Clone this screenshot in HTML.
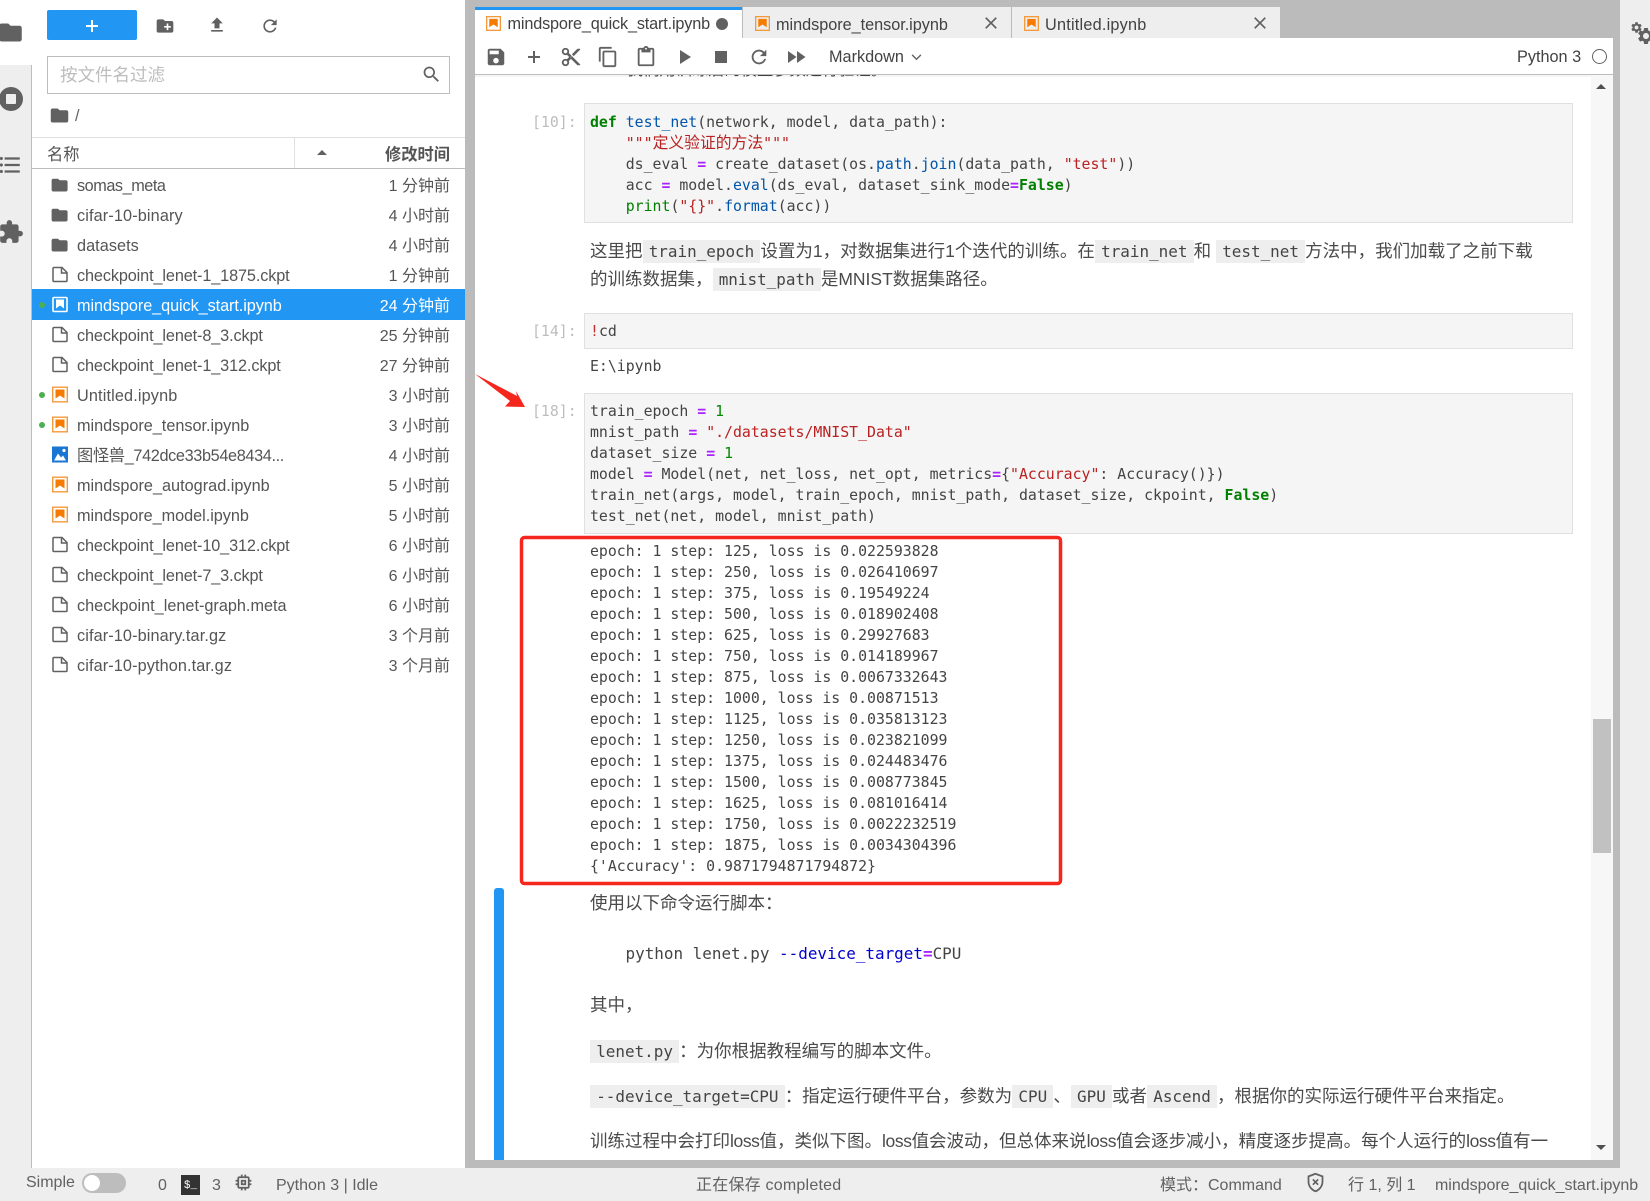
<!DOCTYPE html>
<html lang="zh"><head><meta charset="utf-8"><title>JupyterLab</title>
<style>
html,body{margin:0;padding:0;width:1650px;height:1201px;overflow:hidden;background:#fff}
body{position:relative;font-family:"Liberation Sans","Noto Sans CJK SC",sans-serif;color:#424242;font-size:16.25px}
.a,.i,.b{position:absolute}
.a{white-space:pre;line-height:20px}
.i{fill:#616161;overflow:visible}
.r{position:absolute;left:32px;width:433px;height:30px;color:#555}
.r .n{position:absolute;left:45px;top:1px;line-height:30px;white-space:pre;letter-spacing:-.08px}
.r .t{position:absolute;right:15px;top:1.5px;line-height:30px;white-space:pre;font-size:16px;color:#555}
.r svg{position:absolute;transform:translateY(.5px)}
.r .d{position:absolute;left:7px;top:12px;width:6px;height:6px;border-radius:50%;background:#4caf50}
.sel{background:#2196f3;color:#fff}.sel .t{color:#fff;top:2.5px}.sel .n{top:2px}.sel .d{top:13px}.sel svg{transform:translateY(1.5px)}
.m{font-family:"DejaVu Sans Mono","Noto Sans CJK SC",monospace;font-size:14.85px;line-height:21px;color:#444;position:absolute;white-space:pre}
.p{color:#bdbdbd;left:532px}
.cell{position:absolute;left:584px;width:987px;background:#f5f5f5;border:1px solid #e0e0e0}
.k{color:#008000;font-weight:bold}.f{color:#0055aa}.s{color:#ba2121}.o{color:#aa22ff;font-weight:bold}.g{color:#008000}.nu{color:#008800}
.zh{font-family:"Noto Sans CJK SC",sans-serif;font-size:15.8px;line-height:1}
.md{position:absolute;left:590px;white-space:pre;font-size:17.5px;line-height:28px;color:#4a4a4a;font-family:"Liberation Sans","Noto Sans CJK SC",sans-serif}
.md code{font-family:"DejaVu Sans Mono",monospace;font-size:15.95px;background:#eee;padding:2px 6.2px;color:#444}
.l{letter-spacing:-.4px}
.st{color:#616161;font-size:16px}
.tab{position:absolute;top:7px;height:31px;background:#eee}
</style></head><body>
<svg width="0" height="0" style="position:absolute"><defs>
<symbol id="folder" viewBox="0 0 24 24"><path d="M10 4H4c-1.1 0-1.99.9-1.99 2L2 18c0 1.1.9 2 2 2h16c1.1 0 2-.9 2-2V8c0-1.1-.9-2-2-2h-8l-2-2z"/></symbol>
<symbol id="file" viewBox="0 0 16 16"><path d="M2 1h8l5 5v8a1 1 0 0 1-1 1H2a1 1 0 0 1-1-1V2a1 1 0 0 1 1-1zM9.5 1v5.5H15" fill="none" stroke="#616161" stroke-width="1.5"/></symbol>
<symbol id="filew" viewBox="0 0 16 16"><rect x="1" y="1" width="14" height="14" rx="1" fill="none" stroke="#fff" stroke-width="1.6"/><path d="M4 3h8v9l-4-3-4 3z" fill="#fff"/></symbol>
<symbol id="nb" viewBox="0 0 16 16"><rect x=".7" y=".7" width="14.6" height="14.6" fill="none" stroke="#f59a3c" stroke-width="1.4"/><path d="M3.5 3h9v9l-4.5-3-4.5 3z" fill="#f57c00"/></symbol>
<symbol id="img" viewBox="0 0 16 16"><rect width="16" height="16" fill="#1976d2"/><circle cx="12" cy="4" r="1.6" fill="#fff"/><path d="M2 14l4-7 3 4 2-2 3 5z" fill="#fff"/></symbol>
<symbol id="close" viewBox="0 0 24 24"><path d="M19 6.41L17.59 5 12 10.59 6.41 5 5 6.41 10.59 12 5 17.59 6.41 19 12 13.41 17.59 19 19 17.59 13.41 12z"/></symbol>
<symbol id="gear" viewBox="0 0 24 24"><path d="M19.14 12.94c.04-.3.06-.61.06-.94 0-.32-.02-.64-.07-.94l2.03-1.58c.18-.14.23-.41.12-.61l-1.92-3.32c-.12-.22-.37-.29-.59-.22l-2.39.96c-.5-.38-1.03-.7-1.62-.94l-.36-2.54c-.04-.24-.24-.41-.48-.41h-3.84c-.24 0-.43.17-.47.41l-.36 2.54c-.59.24-1.13.57-1.62.94l-2.39-.96c-.22-.08-.47 0-.59.22L2.74 8.87c-.12.21-.08.47.12.61l2.03 1.58c-.05.3-.09.63-.09.94s.02.64.07.94l-2.03 1.58c-.18.14-.23.41-.12.61l1.92 3.32c.12.22.37.29.59.22l2.39-.96c.5.38 1.03.7 1.62.94l.36 2.54c.05.24.24.41.48.41h3.84c.24 0 .44-.17.47-.41l.36-2.54c.59-.24 1.13-.56 1.62-.94l2.39.96c.22.08.47 0 .59-.22l1.92-3.32c.12-.22.07-.47-.12-.61l-2.01-1.58zM12 15.6c-1.98 0-3.6-1.62-3.6-3.6s1.62-3.6 3.6-3.6 3.6 1.62 3.6 3.6-1.62 3.6-3.6 3.6z"/></symbol>
</defs></svg>

<!-- left rail -->
<div class="b" style="left:0;top:65px;width:31px;height:1103px;background:#eee"></div>
<div class="b" style="left:31px;top:65px;width:1px;height:1103px;background:#bdbdbd"></div>
<svg class="i" style="left:-3px;top:19px;width:27px;height:27px"><use href="#folder"/></svg>
<svg class="i" viewBox="0 0 24 24" style="left:0;top:87px;width:24px;height:24px"><circle cx="11" cy="12" r="12"/><rect x="6" y="7" width="10" height="10" rx="1" fill="#eee"/></svg>
<svg class="i" viewBox="0 0 24 24" style="left:-3px;top:152px;width:26px;height:26px"><path d="M4 10.5c-.83 0-1.5.67-1.5 1.5s.67 1.5 1.5 1.5 1.5-.67 1.5-1.5-.67-1.5-1.5-1.5zm0-6c-.83 0-1.5.67-1.5 1.5S3.17 7.5 4 7.5 5.5 6.83 5.5 6 4.83 4.5 4 4.5zm0 12c-.83 0-1.5.68-1.5 1.5s.68 1.5 1.5 1.5 1.5-.68 1.5-1.5-.67-1.5-1.5-1.5zM7 19h14v-2H7v2zm0-6h14v-2H7v2zm0-8v2h14V5H7z"/></svg>
<svg class="i" viewBox="0 0 24 24" style="left:-2px;top:219px;width:26px;height:26px"><path d="M20.5 11H19V7c0-1.1-.9-2-2-2h-4V3.5C13 2.12 11.88 1 10.5 1S8 2.12 8 3.5V5H4c-1.1 0-1.99.9-1.99 2v3.8H3.5c1.49 0 2.7 1.21 2.7 2.7s-1.21 2.7-2.7 2.7H2V20c0 1.1.9 2 2 2h3.8v-1.5c0-1.49 1.21-2.7 2.7-2.7 1.49 0 2.7 1.21 2.7 2.7V22H17c1.1 0 2-.9 2-2v-4h1.5c1.38 0 2.5-1.12 2.5-2.5S21.88 11 20.5 11z"/></svg>

<!-- file browser toolbar -->
<div class="b" style="left:47px;top:10px;width:90px;height:30px;background:#2196f3;border-radius:2px"></div>
<div class="b" style="left:86px;top:25px;width:12px;height:2px;background:#fff"></div>
<div class="b" style="left:91px;top:20px;width:2px;height:12px;background:#fff"></div>
<svg class="i" viewBox="0 0 24 24" style="left:155px;top:16px;width:20px;height:20px"><path d="M20 6h-8l-2-2H4c-1.11 0-1.99.89-1.99 2L2 18c0 1.11.89 2 2 2h16c1.11 0 2-.89 2-2V8c0-1.11-.89-2-2-2zm-1 8h-3v3h-2v-3h-3v-2h3V9h2v3h3v2z"/></svg>
<svg class="i" viewBox="0 0 24 24" style="left:207px;top:15px;width:20px;height:20px"><path d="M9 16h6v-6h4l-7-7-7 7h4zm-4 2h14v2H5z"/></svg>
<svg class="i" viewBox="0 0 24 24" style="left:260px;top:16px;width:20px;height:20px"><path d="M17.65 6.35C16.2 4.9 14.21 4 12 4c-4.42 0-7.99 3.58-7.99 8s3.57 8 7.99 8c3.73 0 6.84-2.55 7.73-6h-2.08c-.82 2.33-3.04 4-5.65 4-3.31 0-6-2.69-6-6s2.69-6 6-6c1.66 0 3.14.69 4.22 1.78L13 11h7V4l-2.35 2.35z"/></svg>
<div class="b" style="left:47px;top:56px;width:401px;height:36px;border:1px solid #bdbdbd"></div>
<div class="a" style="left:60px;top:65px;font-size:17.5px;color:#bdbdbd">按文件名过滤</div>
<svg class="i" viewBox="0 0 24 24" style="left:421px;top:63.5px;width:21px;height:21px"><path d="M15.5 14h-.79l-.28-.27C15.41 12.59 16 11.11 16 9.5 16 5.91 13.09 3 9.5 3S3 5.91 3 9.5 5.91 16 9.5 16c1.61 0 3.09-.59 4.23-1.57l.27.28v.79l5 4.99L20.49 19l-4.99-5zm-6 0C7.01 14 5 11.99 5 9.5S7.01 5 9.5 5 14 7.01 14 9.5 11.99 14 9.5 14z"/></svg>
<svg class="i" style="left:49px;top:105px;width:21px;height:21px"><use href="#folder"/></svg>
<div class="a" style="left:75px;top:106px;color:#616161">/</div>

<!-- file list header -->
<div class="b" style="left:32px;top:137px;width:433px;height:1px;background:#e0e0e0"></div>
<div class="b" style="left:32px;top:168px;width:433px;height:1px;background:#bdbdbd"></div>
<div class="b" style="left:294px;top:137px;width:1px;height:31px;background:#e0e0e0"></div>
<div class="a" style="left:47px;top:145px;font-size:16.25px;color:#555">名称</div>
<div class="b" style="left:317px;top:150px;width:0;height:0;border-left:5.5px solid transparent;border-right:5.5px solid transparent;border-bottom:5.5px solid #616161"></div>
<div class="a" style="right:1200px;top:145px;font-size:16.25px;font-weight:bold;color:#555">修改时间</div>

<!-- file rows -->
<div class="r" style="top:170px"><svg class="i" style="left:18.4px;top:5.4px;width:19.2px;height:19.2px"><use href="#folder"/></svg><span class="n" style="letter-spacing:-.45px">somas_meta</span><span class="t">1 分钟前</span></div>
<div class="r" style="top:200px"><svg class="i" style="left:18.4px;top:5.4px;width:19.2px;height:19.2px"><use href="#folder"/></svg><span class="n" style="letter-spacing:.13px">cifar-10-binary</span><span class="t">4 小时前</span></div>
<div class="r" style="top:230px"><svg class="i" style="left:18.4px;top:5.4px;width:19.2px;height:19.2px"><use href="#folder"/></svg><span class="n" style="letter-spacing:.05px">datasets</span><span class="t">4 小时前</span></div>
<div class="r" style="top:260px"><svg class="i" style="left:20px;top:6px;width:16px;height:16px"><use href="#file"/></svg><span class="n" style="letter-spacing:-.12px">checkpoint_lenet-1_1875.ckpt</span><span class="t">1 分钟前</span></div>
<div class="r sel" style="top:289px;height:30.5px"><span class="d" style="background:#4caf50"></span><svg class="i" style="left:20px;top:6px;width:16px;height:16px"><use href="#filew"/></svg><span class="n">mindspore_quick_start.ipynb</span><span class="t">24 分钟前</span></div>
<div class="r" style="top:320px"><svg class="i" style="left:20px;top:6px;width:16px;height:16px"><use href="#file"/></svg><span class="n" style="letter-spacing:-.12px">checkpoint_lenet-8_3.ckpt</span><span class="t">25 分钟前</span></div>
<div class="r" style="top:350px"><svg class="i" style="left:20px;top:6px;width:16px;height:16px"><use href="#file"/></svg><span class="n" style="letter-spacing:-.12px">checkpoint_lenet-1_312.ckpt</span><span class="t">27 分钟前</span></div>
<div class="r" style="top:380px"><span class="d"></span><svg class="i" style="left:20px;top:6px;width:16px;height:16px"><use href="#nb"/></svg><span class="n" style="letter-spacing:.14px">Untitled.ipynb</span><span class="t">3 小时前</span></div>
<div class="r" style="top:410px"><span class="d"></span><svg class="i" style="left:20px;top:6px;width:16px;height:16px"><use href="#nb"/></svg><span class="n" style="letter-spacing:-.01px">mindspore_tensor.ipynb</span><span class="t">3 小时前</span></div>
<div class="r" style="top:440px"><svg class="i" style="left:20px;top:6px;width:16px;height:16px"><use href="#img"/></svg><span class="n" style="letter-spacing:-.35px">图怪兽_742dce33b54e8434...</span><span class="t">4 小时前</span></div>
<div class="r" style="top:470px"><svg class="i" style="left:20px;top:6px;width:16px;height:16px"><use href="#nb"/></svg><span class="n" style="letter-spacing:.01px">mindspore_autograd.ipynb</span><span class="t">5 小时前</span></div>
<div class="r" style="top:500px"><svg class="i" style="left:20px;top:6px;width:16px;height:16px"><use href="#nb"/></svg><span class="n" style="letter-spacing:-.03px">mindspore_model.ipynb</span><span class="t">5 小时前</span></div>
<div class="r" style="top:530px"><svg class="i" style="left:20px;top:6px;width:16px;height:16px"><use href="#file"/></svg><span class="n" style="letter-spacing:-.12px">checkpoint_lenet-10_312.ckpt</span><span class="t">6 小时前</span></div>
<div class="r" style="top:560px"><svg class="i" style="left:20px;top:6px;width:16px;height:16px"><use href="#file"/></svg><span class="n" style="letter-spacing:-.12px">checkpoint_lenet-7_3.ckpt</span><span class="t">6 小时前</span></div>
<div class="r" style="top:590px"><svg class="i" style="left:20px;top:6px;width:16px;height:16px"><use href="#file"/></svg><span class="n" style="letter-spacing:0">checkpoint_lenet-graph.meta</span><span class="t">6 小时前</span></div>
<div class="r" style="top:620px"><svg class="i" style="left:20px;top:6px;width:16px;height:16px"><use href="#file"/></svg><span class="n" style="letter-spacing:.11px">cifar-10-binary.tar.gz</span><span class="t">3 个月前</span></div>
<div class="r" style="top:650px"><svg class="i" style="left:20px;top:6px;width:16px;height:16px"><use href="#file"/></svg><span class="n" style="letter-spacing:.11px">cifar-10-python.tar.gz</span><span class="t">3 个月前</span></div>

<!-- main area -->
<div class="b" style="left:465px;top:0;width:1155px;height:1168px;background:#bbb"></div>
<div class="b" style="left:1620px;top:0;width:30px;height:1168px;background:#eee"></div>
<svg class="i" style="left:1630px;top:21px;width:13px;height:13px"><use href="#gear"/></svg>
<svg class="i" style="left:1636px;top:26px;width:20px;height:20px"><use href="#gear"/></svg>
<div class="b" style="left:475px;top:38px;width:1138px;height:1122px;background:#fff"></div>

<!-- notebook content -->
<div class="a" style="left:627px;top:60px;font-size:16.25px;color:#444">我们用训练后的模型参数进行验证。</div>

<div class="cell" style="top:103px;height:118px"></div>
<div class="m p" style="top:112px">[10]:</div>
<div class="m" style="left:590px;top:112px"><span class="k">def</span> <span class="f">test_net</span>(network, model, data_path):
    <span class="s">"""<span class="zh">定义验证的方法</span>"""</span>
    ds_eval <span class="o">=</span> create_dataset(os.<span class="f">path</span>.<span class="f">join</span>(data_path, <span class="s">"test"</span>))
    acc <span class="o">=</span> model.<span class="f">eval</span>(ds_eval, dataset_sink_mode<span class="o">=</span><span class="k">False</span>)
    <span class="g">print</span>(<span class="s">"{}"</span>.<span class="f">format</span>(acc))</div>

<div class="md" style="top:237px">这里把<code>train_epoch</code>设置为1，对数据集进行1个迭代的训练。在<code>train_net</code>和 <code>test_net</code>方法中，我们加载了之前下载</div>
<div class="md" style="top:265px">的训练数据集，<code>mnist_path</code>是MNIST数据集路径。</div>

<div class="cell" style="top:313px;height:34px"></div>
<div class="m p" style="top:321px">[14]:</div>
<div class="m" style="left:590px;top:321px"><span class="s" style="color:#c03030">!</span>cd</div>
<div class="m" style="left:590px;top:356px">E:\ipynb</div>

<div class="cell" style="top:393px;height:139px"></div>
<div class="m p" style="top:401px">[18]:</div>
<div class="m" style="left:590px;top:401px">train_epoch <span class="o">=</span> <span class="nu">1</span>
mnist_path <span class="o">=</span> <span class="s">"./datasets/MNIST_Data"</span>
dataset_size <span class="o">=</span> <span class="nu">1</span>
model <span class="o">=</span> Model(net, net_loss, net_opt, metrics<span class="o">=</span>{<span class="s">"Accuracy"</span>: Accuracy()})
train_net(args, model, train_epoch, mnist_path, dataset_size, ckpoint, <span class="k">False</span>)
test_net(net, model, mnist_path)</div>

<div class="m" style="left:590px;top:541px">epoch: 1 step: 125, loss is 0.022593828
epoch: 1 step: 250, loss is 0.026410697
epoch: 1 step: 375, loss is 0.19549224
epoch: 1 step: 500, loss is 0.018902408
epoch: 1 step: 625, loss is 0.29927683
epoch: 1 step: 750, loss is 0.014189967
epoch: 1 step: 875, loss is 0.0067332643
epoch: 1 step: 1000, loss is 0.00871513
epoch: 1 step: 1125, loss is 0.035813123
epoch: 1 step: 1250, loss is 0.023821099
epoch: 1 step: 1375, loss is 0.024483476
epoch: 1 step: 1500, loss is 0.008773845
epoch: 1 step: 1625, loss is 0.081016414
epoch: 1 step: 1750, loss is 0.0022232519
epoch: 1 step: 1875, loss is 0.0034304396
{'Accuracy': 0.9871794871794872}</div>

<div class="b" style="left:494px;top:888px;width:10px;height:272px;background:#2196f3;border-radius:3px 3px 0 0"></div>
<div class="md" style="top:889px">使用以下命令运行脚本：</div>
<div class="m" style="left:625.5px;top:942.5px;font-size:15.95px">python lenet.py <span style="color:#0000cc">--device_target</span><span class="o">=</span>CPU</div>
<div class="md" style="top:991px">其中，</div>
<div class="md" style="top:1037px"><code>lenet.py</code>：为你根据教程编写的脚本文件。</div>
<div class="md" style="top:1082px"><code>--device_target=CPU</code>：指定运行硬件平台，参数为<code>CPU</code>、<code>GPU</code>或者<code>Ascend</code>，根据你的实际运行硬件平台来指定。</div>
<div class="md" style="top:1127px">训练过程中会打印<span class="l">loss</span>值，类似下图。<span class="l">loss</span>值会波动，但总体来说<span class="l">loss</span>值会逐步减小，精度逐步提高。每个人运行的<span class="l">loss</span>值有一</div>

<!-- annotations -->
<svg class="b" style="left:0;top:0;width:1650px;height:1201px;pointer-events:none">
<polygon points="475,374 517,396 516,391 525,407 505,406.5 510,401" fill="#f5261e"/>
<rect x="521.5" y="537.5" width="539" height="346" rx="3" fill="none" stroke="#f5261e" stroke-width="3.5"/>
</svg>

<!-- notebook toolbar -->
<div class="b" style="left:475px;top:38px;width:1138px;height:36px;background:#fff"></div>
<div class="b" style="left:475px;top:74px;width:1138px;height:1px;background:#bdbdbd"></div>
<div class="b" style="left:475px;top:75px;width:1138px;height:2px;background:rgba(0,0,0,.04)"></div>

<!-- tabs -->
<div class="tab" style="left:475px;width:267px;background:#fff;border-top:3px solid #2196f3;top:7px;height:29px"></div>
<div class="tab" style="left:743px;width:268px"></div>
<div class="tab" style="left:1012px;width:268px"></div>
<svg class="i" style="left:486px;top:16px;width:15px;height:15px"><use href="#nb"/></svg>
<div class="a" style="left:507.5px;top:14px;letter-spacing:-.16px">mindspore_quick_start.ipynb</div>
<div class="b" style="left:716px;top:18px;width:12px;height:12px;border-radius:50%;background:#616161"></div>
<svg class="i" style="left:755px;top:16px;width:15px;height:15px"><use href="#nb"/></svg>
<div class="a" style="left:776px;top:15px;letter-spacing:-.03px">mindspore_tensor.ipynb</div>
<svg class="i" style="left:981px;top:13px;width:20px;height:20px"><use href="#close"/></svg>
<svg class="i" style="left:1024px;top:16px;width:15px;height:15px"><use href="#nb"/></svg>
<div class="a" style="left:1045px;top:15px;letter-spacing:.22px">Untitled.ipynb</div>
<svg class="i" style="left:1250px;top:13px;width:20px;height:20px"><use href="#close"/></svg>

<!-- toolbar icons -->
<svg class="i" viewBox="0 0 24 24" style="left:485px;top:46px;width:22px;height:22px"><path d="M17 3H5c-1.11 0-2 .9-2 2v14c0 1.1.89 2 2 2h14c1.1 0 2-.9 2-2V7l-4-4zm-5 16c-1.66 0-3-1.34-3-3s1.34-3 3-3 3 1.34 3 3-1.34 3-3 3zm3-10H5V5h10v4z"/></svg>
<div class="b" style="left:528px;top:56px;width:12px;height:2px;background:#616161"></div>
<div class="b" style="left:533px;top:51px;width:2px;height:12px;background:#616161"></div>
<svg class="i" viewBox="0 0 24 24" style="left:560px;top:46px;width:22px;height:22px"><path d="M9.64 7.64c.23-.5.36-1.05.36-1.64 0-2.21-1.79-4-4-4S2 3.79 2 6s1.79 4 4 4c.59 0 1.14-.13 1.64-.36L10 12l-2.36 2.36C7.14 14.13 6.59 14 6 14c-2.21 0-4 1.79-4 4s1.79 4 4 4 4-1.79 4-4c0-.59-.13-1.14-.36-1.64L12 14l7 7h3v-1L9.64 7.64zM6 8c-1.1 0-2-.89-2-2s.9-2 2-2 2 .89 2 2-.9 2-2 2zm0 12c-1.1 0-2-.89-2-2s.9-2 2-2 2 .89 2 2-.9 2-2 2zm6-7.5c-.28 0-.5-.22-.5-.5s.22-.5.5-.5.5.22.5.5-.22.5-.5.5zM19 3l-6 6 2 2 7-7V3z"/></svg>
<svg class="i" viewBox="0 0 24 24" style="left:597px;top:46px;width:22px;height:22px"><path d="M16 1H4c-1.1 0-2 .9-2 2v14h2V3h12V1zm3 4H8c-1.1 0-2 .9-2 2v14c0 1.1.9 2 2 2h11c1.1 0 2-.9 2-2V7c0-1.1-.9-2-2-2zm0 16H8V7h11v14z"/></svg>
<svg class="i" viewBox="0 0 24 24" style="left:635px;top:46px;width:22px;height:22px"><path d="M19 2h-4.18C14.4.84 13.3 0 12 0c-1.3 0-2.4.84-2.82 2H5c-1.1 0-2 .9-2 2v16c0 1.1.9 2 2 2h14c1.1 0 2-.9 2-2V4c0-1.1-.9-2-2-2zm-7 0c.55 0 1 .45 1 1s-.45 1-1 1-1-.45-1-1 .45-1 1-1zm7 18H5V4h2v3h10V4h2v16z"/></svg>
<svg class="i" viewBox="0 0 24 24" style="left:672px;top:45px;width:24px;height:24px"><path d="M8 5v14l11-7z"/></svg>
<svg class="i" viewBox="0 0 24 24" style="left:709px;top:45px;width:24px;height:24px"><path d="M6 6h12v12H6z"/></svg>
<svg class="i" viewBox="0 0 24 24" style="left:748px;top:46px;width:22px;height:22px"><path d="M17.65 6.35C16.2 4.9 14.21 4 12 4c-4.42 0-7.99 3.58-7.99 8s3.57 8 7.99 8c3.73 0 6.84-2.55 7.73-6h-2.08c-.82 2.33-3.04 4-5.65 4-3.31 0-6-2.69-6-6s2.69-6 6-6c1.66 0 3.14.69 4.22 1.78L13 11h7V4l-2.35 2.35z"/></svg>
<svg class="i" viewBox="0 0 24 24" style="left:784px;top:45px;width:24px;height:24px"><path d="M4 18l8.5-6L4 6v12zm9-12v12l8.5-6L13 6z"/></svg>
<div class="a" style="left:829px;top:47px;color:#424242">Markdown</div>
<svg class="b" viewBox="0 0 12 8" style="left:911px;top:54px;width:11px;height:7px"><path d="M1 1l5 5 5-5" fill="none" stroke="#616161" stroke-width="1.6"/></svg>
<div class="a" style="left:1517px;top:47px;color:#424242">Python 3</div>
<div class="b" style="left:1592px;top:49px;width:13px;height:13px;border:1.5px solid #616161;border-radius:50%"></div>

<!-- scrollbar -->
<div class="b" style="left:1591px;top:75px;width:22px;height:1085px;background:#f7f7f7"></div>
<div class="b" style="left:1596px;top:84px;width:0;height:0;border-left:5px solid transparent;border-right:5px solid transparent;border-bottom:5px solid #505050"></div>
<div class="b" style="left:1593px;top:719px;width:18px;height:134px;background:#c1c1c1"></div>
<div class="b" style="left:1596px;top:1145px;width:0;height:0;border-left:5px solid transparent;border-right:5px solid transparent;border-top:5px solid #505050"></div>

<!-- status bar -->
<div class="b" style="left:0;top:1168px;width:1650px;height:33px;background:#eee"></div>
<div class="a st" style="left:26px;top:1173px">Simple</div>
<div class="b" style="left:82px;top:1173px;width:44px;height:20px;background:#bdbdbd;border-radius:10px"></div>
<div class="b" style="left:84px;top:1175px;width:16px;height:16px;background:#fff;border-radius:50%"></div>
<div class="a st" style="left:158px;top:1176px">0</div>
<div class="a" style="left:181px;top:1175px;width:19px;height:20px;background:#333;color:#fff;font-size:11px;text-align:center;line-height:22px;font-family:'Liberation Mono',monospace">$_</div>
<div class="a st" style="left:212px;top:1176px">3</div>
<svg class="i" viewBox="0 0 24 24" style="left:233px;top:1172px;width:21px;height:21px"><path d="M15 9H9v6h6V9zm-2 4h-2v-2h2v2zm8-2V9h-2V7c0-1.1-.9-2-2-2h-2V3h-2v2h-2V3H9v2H7c-1.1 0-2 .9-2 2v2H3v2h2v2H3v2h2v2c0 1.1.9 2 2 2h2v2h2v-2h2v2h2v-2h2c1.1 0 2-.9 2-2v-2h2v-2h-2v-2h2zm-4 6H7V7h10v10z"/></svg>
<div class="a st" style="left:276px;top:1176px">Python 3 | Idle</div>
<div class="a st" style="left:696px;top:1176px;letter-spacing:.22px">正在保存 completed</div>
<div class="a st" style="left:1160px;top:1176px">模式：Command</div>
<svg class="b" viewBox="0 0 24 24" style="left:1305px;top:1172px;width:21px;height:21px"><path d="M12 2L4 5v6c0 5 3.4 9.4 8 11 4.6-1.6 8-6 8-11V5z" fill="none" stroke="#616161" stroke-width="2"/><path d="M9 8.5l6 6M15 8.5l-6 6" stroke="#616161" stroke-width="2"/></svg>
<div class="a st" style="left:1348px;top:1176px">行 1, 列 1</div>
<div class="a st" style="left:1435px;top:1176px;letter-spacing:-.02px">mindspore_quick_start.ipynb</div>
</body></html>
